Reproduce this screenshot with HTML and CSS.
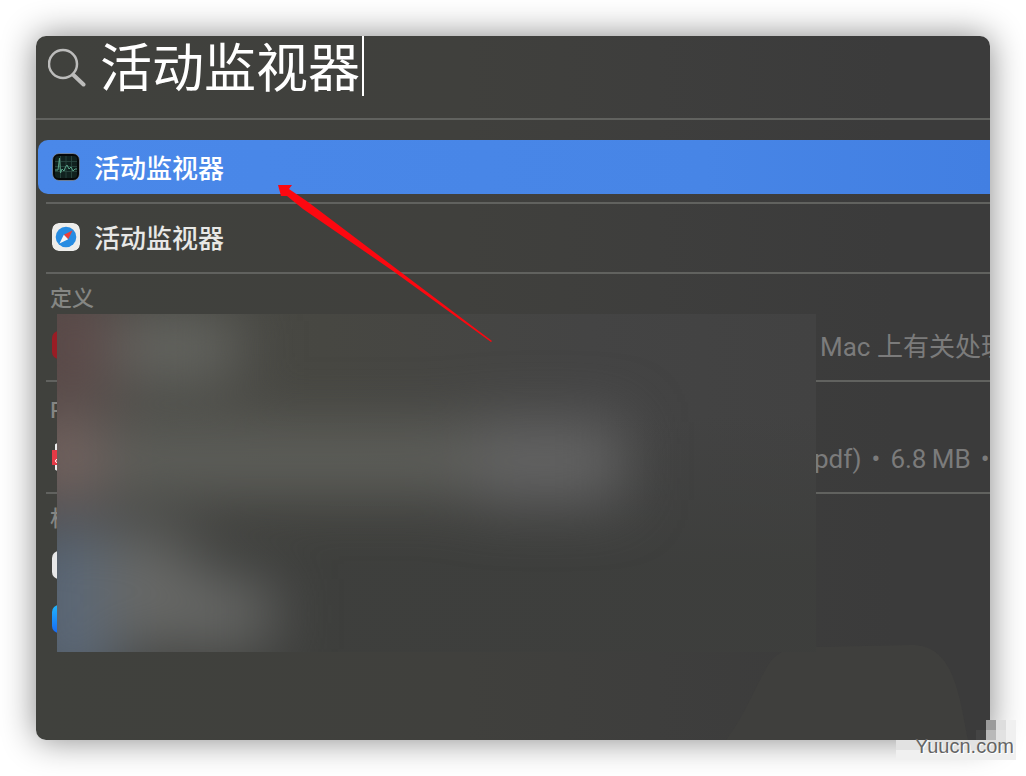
FILE: index.html
```html
<!DOCTYPE html>
<html lang="zh-CN">
<head>
  <meta charset="UTF-8" />
  <meta name="viewport" content="width=device-width, initial-scale=1.0" />
  <title>活动监视器</title>
  <link rel="stylesheet" href="styles.css">
</head>
<body>
  <main class="spotlight">
    <svg class="tint" viewBox="0 0 254 95" aria-hidden="true">
      <path d="M0 95C16 75 28 45 42 20C52 4 68 2 90 2L185 0C225 0 232 40 242 95Z" />
    </svg>

    <form class="search" role="search">
      <svg class="search-icon" viewBox="0 0 38 42" aria-hidden="true">
        <circle cx="15" cy="18" r="14" />
        <path class="handle" d="M25.500 29L35.500 38.500" />
      </svg>
      <input type="text" class="search-input" aria-label="搜索" value="活动监视器" />
      <span class="caret"></span>
    </form>

    <div class="results">
      <section class="group first">
        <a class="row selected" href="#">
          <svg class="icon" viewBox="0 0 28 28" aria-hidden="true">
            <rect x="0.500" y="0.500" width="27" height="27" rx="6.500" fill="#060808" stroke="#8d97a5" stroke-width="0.700" />
            <rect x="3" y="3" width="22" height="22" rx="3" fill="#10211e" />
            <path d="M3 8.500H25M3 13.500H25M3 18.500H25M8.500 3V25M14 3V25M19.500 3V25" stroke="#2c4a42" stroke-width="0.800" />
            <path d="M3 17H6L7.500 5L8.500 20L10 16L12 18L13.500 14L15 12L17 16L19 14L21 18L23 16H25" fill="none" stroke="#5aa388" stroke-width="1" />
          </svg>
          <span class="title">活动监视器</span>
        </a>
      </section>

      <section class="group">
        <a class="row" href="#">
          <svg class="icon" viewBox="0 0 28 28" aria-hidden="true">
            <rect width="28" height="28" rx="6.500" fill="#ededeb" />
            <circle cx="14" cy="14" r="10.300" fill="#278ce2" />
            <path d="M20.500 7.500L11.800 11.800L16.200 16.200Z" fill="#ec3f38" />
            <path d="M7.500 20.500L11.800 11.800L16.200 16.200Z" fill="#f5f5f5" />
          </svg>
          <span class="title">活动监视器</span>
        </a>
      </section>

      <section class="group">
        <h2>定义</h2>
        <a class="row" href="#">
          <span class="icon dictionary"></span>
          <span class="detail">Mac 上有关处理</span>
        </a>
      </section>

      <section class="group files">
        <h2>P</h2>
        <a class="row" href="#">
          <svg class="icon" viewBox="0 0 28 28" aria-hidden="true">
            <rect x="3" width="22" height="28" fill="#eeeeee" />
            <rect y="7" width="28" height="15" fill="#e63946" />
            <circle cx="5" cy="18" r="1.500" fill="none" stroke="#ffffff" />
          </svg>
          <span class="detail size"><span>pdf)</span><span>•</span><span>6.8&#8201;MB</span><span>•</span></span>
        </a>
      </section>

      <section class="group">
        <h2>相</h2>
        <a class="row" href="#" aria-label="搜索"><span class="icon web"></span></a>
        <a class="row" href="#" aria-label="商店"><span class="icon store"></span></a>
      </section>

      <div class="frost">
        <svg viewBox="0 0 760 338" aria-hidden="true">
          <g class="smear">
            <rect x="-40" y="-30" width="95" height="120" fill="#5c4a49" />
            <rect x="55" y="5" width="125" height="58" fill="#696a65" />
            <rect x="-40" y="105" width="85" height="80" fill="#776461" />
            <rect x="40" y="115" width="380" height="60" fill="#62635e" />
            <rect x="415" y="108" width="150" height="78" fill="#656565" />
            <path d="M-40 210L60 210L60 380L-40 380Z" fill="#5b6878" />
            <path d="M45 215H115L155 265H215V335H45Z" fill="#676866" />
          </g>
        </svg>
      </div>
    </div>

    <svg class="arrow" viewBox="0 0 214 158" aria-hidden="true">
      <path d="M0 0L14 0L11 4L30 17L120 85L214 156L213 157L115 86L25 24L9 11L3 11Z" />
    </svg>

    <div class="watermark">
      <svg class="mosaic" viewBox="0 0 120 40" aria-hidden="true">
        <path fill="#444444" d="M80 10H90V20H80Z" />
        <path fill="#9b9b9b" d="M90 0H100V10H90Z" />
        <path fill="#b9b9b9" d="M90 10H100V20H90Z" />
        <path fill="#dddddd" d="M100 0H110V10H100Z" />
        <path fill="#e2e2e2" d="M100 10H110V20H100ZM0 20H110V30H0Z" />
        <path fill="#f0f0f0" d="M110 0H120V40H110ZM0 30H110V40H0Z" />
      </svg>
      <span>Yuucn.com</span>
    </div>
  </main>
</body>
</html>
```
FILE: styles.css
```css
* {
  box-sizing: border-box;
}
body {
  margin: 0;
  padding: 36px;
  background: #fff;
  font-family: Inter, "Noto Sans CJK SC", sans-serif;
}
.spotlight {
  position: relative;
  min-height: calc(100vh - 72px);
  border-radius: 10px;
  color: #e8e8e6;
  background: linear-gradient(90deg, #40413d 0%, #40403d 45%, #3e3e3d 65%, #3b3b3b 90%);
  box-shadow: 0 0 34px rgba(0, 0, 0, 0.48);
}
.tint {
  position: absolute;
  right: 10px;
  bottom: 0;
  width: 254px;
  height: 95px;
  fill: #3f3f3d;
}

/* search field */
.search {
  display: flex;
  align-items: flex-start;
  height: 84px;
  padding-left: 12px;
  border-bottom: 2px solid #61625f;
}
.search-icon {
  width: 38px;
  height: 42px;
  margin: 10px 14px 0 0;
  fill: none;
  stroke: #bcbcbb;
  stroke-width: 2.5;
}
.search-icon .handle {
  stroke-width: 4;
  stroke-linecap: round;
}
.search-input {
  width: 262px;
  height: 58px;
  padding: 0;
  border: 0;
  outline: 0;
  background: transparent;
  color: #fff;
  font-family: "Noto Sans CJK SC", sans-serif;
  font-size: 52px;
  line-height: 58px;
}
.caret {
  width: 2px;
  height: 60px;
  background: #fff;
}

/* result list */
.results {
  position: relative;
  padding: 20px 0 0 10px;
  overflow: hidden;
}
.group {
  padding: 6px 0 8px;
  border-top: 2px solid #61625f;
}
.group.first {
  padding: 0 0 8px;
  border-top: 0;
}
.group.files {
  padding: 10px 0 8px;
}
.group h2 {
  margin: 0;
  padding-left: 4px;
  height: 38px;
  font-size: 22px;
  font-weight: 500;
  line-height: 36px;
  color: #858683;
}
.row {
  display: flex;
  align-items: center;
  gap: 14px;
  height: 54px;
  margin-left: -8px;
  padding-left: 14px;
  border-radius: 10px 0 0 10px;
  color: inherit;
  font-size: 26px;
  font-weight: 500;
  line-height: 38px;
  white-space: nowrap;
  text-decoration: none;
}
.row.selected {
  background: linear-gradient(90deg, #4a88e9, #4785e6 70%, #427fe2);
  color: #fff;
}
.title,
.detail {
  padding-top: 4px;
}
.icon {
  flex: none;
  width: 28px;
  height: 28px;
  border-radius: 7px;
}
.dictionary {
  background: #991d25;
}
.web {
  background: #e8e8e8;
}
.store {
  background: linear-gradient(#20b5fb, #1769f5);
}
.detail {
  margin-left: 726px;
  color: #7b7b7b;
  font-family: Roboto, "Noto Sans CJK SC", sans-serif;
  font-weight: 400;
}
.detail.size {
  display: flex;
  gap: 10px;
  margin-left: 720px;
}

/* frosted patch over the private results */
.frost {
  position: absolute;
  top: 194px;
  left: 21px;
  width: 759px;
  height: 338px;
  overflow: hidden;
  background:
    linear-gradient(transparent 30%, rgba(61, 62, 60, 0.9) 75%),
    linear-gradient(90deg, #4a4a46, #474742 35%, #444444 70%, #424242);
}
.frost svg {
  display: block;
  width: 760px;
  height: 338px;
  overflow: visible;
}
.smear {
  filter: blur(30px);
}

/* pointer and site mark */
.arrow {
  position: absolute;
  top: 149px;
  left: 242px;
  width: 214px;
  height: 158px;
  fill: #fc0810;
}
.watermark {
  position: absolute;
  right: -26px;
  bottom: -20px;
  width: 120px;
  height: 40px;
  color: #656565;
  font-family: "Liberation Sans", sans-serif;
  font-size: 20px;
  line-height: 24px;
  text-shadow: 1px 1px #fff;
}
.mosaic {
  display: block;
  width: 120px;
  height: 40px;
}
.watermark span {
  position: absolute;
  left: 19px;
  top: 14px;
}
```
